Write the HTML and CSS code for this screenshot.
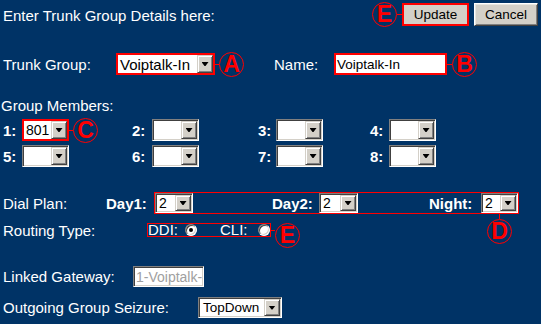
FILE: index.html
```html
<!DOCTYPE html>
<html>
<head>
<meta charset="utf-8">
<title>Trunk Group</title>
<link rel="stylesheet" href="styles.css">
</head>
<body>
<div class="page">
  <div class="row hdr">
    <span class="title">Enter Trunk Group Details here:</span>
    <div class="actions">
      <span class="badge">E</span><span class="hline w6"></span>
      <button class="btn btn-update boxed">Update</button>
      <button class="btn btn-cancel">Cancel</button>
    </div>
  </div>

  <div class="row r-trunk">
    <span class="lbl l-trunk">Trunk Group:</span>
    <span class="sel w-trunk boxed"><span class="val v15">Voiptalk-In</span><span class="dd"></span></span>
    <span class="hline w4"></span><span class="badge">A</span>
    <span class="lbl l-name">Name:</span>
    <span class="inp w-name boxed">Voiptalk-In</span>
    <span class="hline w5"></span><span class="badge">B</span>
  </div>

  <div class="row r-gm"><span class="lbl l-gm">Group Members:</span></div>

  <div class="members">
    <span class="ml">1:</span>
    <span class="cell"><span class="sel w-mem boxed"><span class="val">801</span><span class="dd"></span></span><span class="hline w4"></span><span class="badge">C</span></span>
    <span class="ml">2:</span>
    <span class="cell"><span class="sel w-mem"><span class="val"></span><span class="dd"></span></span></span>
    <span class="ml">3:</span>
    <span class="cell"><span class="sel w-mem"><span class="val"></span><span class="dd"></span></span></span>
    <span class="ml">4:</span>
    <span class="cell"><span class="sel w-mem"><span class="val"></span><span class="dd"></span></span></span>
    <span class="ml">5:</span>
    <span class="cell"><span class="sel w-mem"><span class="val"></span><span class="dd"></span></span></span>
    <span class="ml">6:</span>
    <span class="cell"><span class="sel w-mem"><span class="val"></span><span class="dd"></span></span></span>
    <span class="ml">7:</span>
    <span class="cell"><span class="sel w-mem"><span class="val"></span><span class="dd"></span></span></span>
    <span class="ml">8:</span>
    <span class="cell"><span class="sel w-mem"><span class="val"></span><span class="dd"></span></span></span>
  </div>

  <div class="row r-dial">
    <span class="lbl l-dial">Dial Plan:</span>
    <span class="bl l-day1">Day1:</span>
    <div class="dialbox">
      <span class="sel w-d1 h20"><span class="val">2</span><span class="dd"></span></span>
      <span class="bl l-day2">Day2:</span>
      <span class="sel w-d2 h20"><span class="val">2</span><span class="dd"></span></span>
      <span class="bl l-night">Night:</span>
      <span class="nightwrap">
        <span class="sel w-d3 h20"><span class="val">2</span><span class="dd"></span></span>
        <span class="vline"></span><span class="badge badge-d">D</span>
      </span>
    </div>
  </div>

  <div class="row r-route">
    <span class="lbl l-route">Routing Type:</span>
    <div class="routebox">
      <span class="rt">DDI:</span><span class="radio r-ddi on"></span>
      <span class="rt r-cli">CLI:</span><span class="radio r-clir"></span>
    </div>
    <span class="hline w4"></span><span class="badge badge-top">E</span>
  </div>

  <div class="row r-gw">
    <span class="lbl l-gw">Linked Gateway:</span>
    <span class="inp w-gw disabled"><span class="gwtext">1-Voiptalk-In</span></span>
  </div>

  <div class="row r-out">
    <span class="lbl l-out">Outgoing Group Seizure:</span>
    <span class="sel w-out"><span class="val v135">TopDown</span><span class="dd"></span></span>
  </div>
</div>
</body>
</html>
```
FILE: styles.css
```css
html, body {
  margin: 0;
  padding: 0;
}
body {
  background: #003366;
  color: #ffffff;
  font-family: "Liberation Sans", Arial, sans-serif;
  font-size: 15px;
  width: 541px;
  height: 324px;
  overflow: hidden;
}
.page {
  display: flex;
  flex-direction: column;
  padding-top: 3px;
}
.row {
  display: flex;
  align-items: center;
  flex-shrink: 0;
  padding-left: 3px;
}
.lbl {
  flex-shrink: 0;
  white-space: nowrap;
  line-height: 17px;
}
.bl {
  font-weight: bold;
  white-space: nowrap;
  flex-shrink: 0;
  line-height: 17px;
}

/* header */
.hdr {
  height: 23px;
  justify-content: space-between;
  padding-right: 3px;
}
.title {
  line-height: 17px;
  padding-top: 2px;
}
.actions {
  display: flex;
  align-items: center;
  height: 23px;
}
.btn {
  box-sizing: border-box;
  height: 23px;
  margin: 0;
  padding: 0;
  font-family: "Liberation Sans", Arial, sans-serif;
  font-size: 13.5px;
  color: #000;
  background: #d4d0c8;
  border: 1px solid;
  border-color: #ffffff #404040 #404040 #ffffff;
  box-shadow: inset 1px 1px 0 #e8e6e0, inset -1px -1px 0 #808080;
}
.btn-update { width: 67px; }
.btn-cancel { width: 64px; margin-left: 5px; }

.boxed {
  outline: 2px solid #ff0000;
  outline-offset: -2px;
}

/* badges */
.badge {
  box-sizing: border-box;
  width: 25px;
  height: 25px;
  flex-shrink: 0;
  border: 1.5px solid #ff0000;
  border-radius: 50%;
  color: #ff0000;
  font-weight: bold;
  font-size: 23px;
  line-height: 1;
  display: flex;
  align-items: center;
  justify-content: center;
}
.hline {
  height: 1px;
  background: #ff0000;
  flex-shrink: 0;
}
.w4 { width: 4px; }
.w5 { width: 5px; }
.w6 { width: 5px; }

/* select-like control */
.sel {
  box-sizing: border-box;
  display: inline-flex;
  flex-shrink: 0;
  height: 22px;
  padding: 1px;
  background: #ffffff;
  color: #000;
  border: 1px solid;
  border-color: #808080 #ffffff #ffffff #808080;
  box-shadow: inset 1px 1px 0 #404040, inset -1px -1px 0 #d4d0c8;
}
.sel.h20 { height: 20px; }
.val {
  flex: 1;
  display: flex;
  align-items: center;
  padding-left: 2px;
  font-size: 14px;
  white-space: nowrap;
  overflow: hidden;
}
.v15 { font-size: 15px; }
.v135 { font-size: 13.5px; padding-left: 3px; }
.dd {
  box-sizing: border-box;
  width: 16px;
  flex-shrink: 0;
  background: #d4d0c8;
  border: 1px solid;
  border-color: #d4d0c8 #404040 #404040 #d4d0c8;
  box-shadow: inset 1px 1px 0 #ffffff, inset -1px -1px 0 #808080;
  display: flex;
  align-items: center;
  justify-content: center;
}
.dd::after {
  content: "";
  width: 7px;
  height: 4px;
  background: #000;
  clip-path: polygon(0 0, 7px 0, 4px 4px, 3px 4px);
}

.inp {
  box-sizing: border-box;
  display: flex;
  align-items: center;
  flex-shrink: 0;
  height: 22px;
  padding-left: 2px;
  background: #fff;
  color: #000;
  font-size: 13.5px;
  white-space: nowrap;
  overflow: hidden;
  border: 1px solid;
  border-color: #808080 #ffffff #ffffff #808080;
  box-shadow: inset 1px 1px 0 #404040, inset -1px -1px 0 #d4d0c8;
}
.inp.disabled {
  color: #a0a0a0;
  font-size: 14px;
  height: 21px;
}
.gwtext {
  display: block;
  overflow: hidden;
  text-overflow: clip;
  max-width: 66px;
}

/* trunk row */
.r-trunk { height: 22px; margin-top: 27px; }
.l-trunk { width: 113px; }
.w-trunk { width: 99px; }
.l-name { width: 60px; margin-left: 30px; }
.w-name { width: 113px; }

/* group members */
.r-gm { height: 17px; margin-top: 22px; padding-left: 1px; }
.members {
  display: grid;
  grid-template-columns: 19px 110px 20px 106px 18px 94px 19px 47px;
  grid-auto-rows: 22px;
  row-gap: 4px;
  margin-top: 5px;
  padding-left: 3px;
}
.ml {
  font-weight: bold;
  align-self: center;
  line-height: 17px;
}
.cell {
  display: flex;
  align-items: center;
}
.w-mem { width: 47px; }

/* dial plan */
.r-dial { height: 22px; margin-top: 25px; }
.l-dial { width: 103px; }
.l-day1 { width: 48px; }
.dialbox {
  box-sizing: border-box;
  display: flex;
  align-items: center;
  width: 365px;
  height: 22px;
  border: 1px solid #ff0000;
}
.w-d1 { width: 38px; }
.l-day2 { width: 47px; margin-left: 79px; }
.w-d2 { width: 39px; }
.l-night { width: 52px; margin-left: 71px; }
.nightwrap {
  position: relative;
  display: flex;
}
.w-d3 { width: 37px; }
.vline {
  position: absolute;
  left: 18px;
  top: 20px;
  width: 1px;
  height: 6px;
  background: #ff0000;
}
.badge-d {
  position: absolute;
  left: 6px;
  top: 26px;
}

/* routing */
.r-route { height: 14px; margin-top: 9px; }
.l-route { width: 144px; }
.routebox {
  box-sizing: border-box;
  display: flex;
  align-items: center;
  width: 124px;
  height: 14px;
  border: 1px solid #ff0000;
}
.rt {
  line-height: 12px;
  white-space: nowrap;
}
.radio {
  box-sizing: border-box;
  width: 12px;
  height: 12px;
  flex-shrink: 0;
  border-radius: 50%;
  background: #fff;
  border: 1px solid;
  border-color: #808080 #ffffff #ffffff #808080;
  box-shadow: inset 1px 1px 0 #404040, inset -1px -1px 0 #d4d0c8;
  display: flex;
  align-items: center;
  justify-content: center;
}
.radio.on::after {
  content: "";
  width: 4px;
  height: 4px;
  border-radius: 50%;
  background: #000;
}
.r-ddi { margin-left: 7px; }
.r-cli { margin-left: 23px; }
.r-clir { margin-left: 10px; }
.badge-top { align-self: flex-start; }

/* gateway */
.r-gw { height: 21px; margin-top: 29px; }
.l-gw { width: 130px; }
.w-gw { width: 71px; }

/* outgoing */
.r-out { height: 21px; margin-top: 10px; }
.l-out { width: 195px; }
.w-out { width: 84px; height: 21px; }
```
